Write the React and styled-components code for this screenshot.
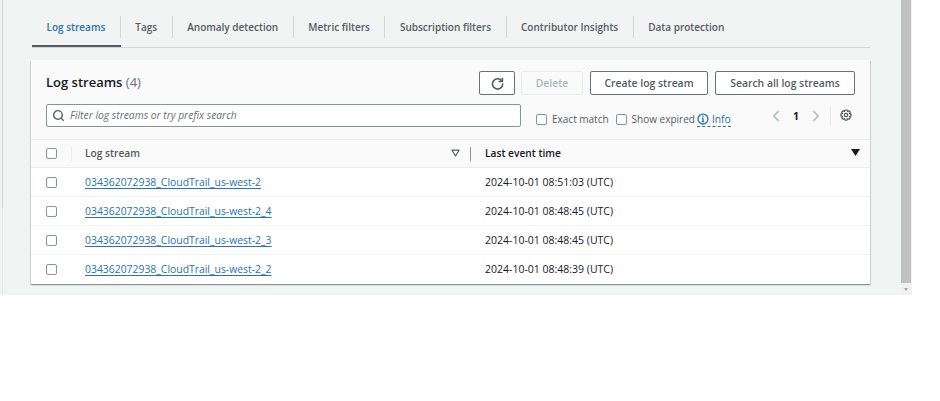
import React from 'react';
import styled, { createGlobalStyle } from 'styled-components';
import { FiSearch, FiChevronLeft, FiChevronRight } from 'react-icons/fi';

const GlobalStyle = createGlobalStyle`
  html, body {
    margin: 0;
    padding: 0;
    background: #fff;
    font-family: "Open Sans", "Noto Sans", sans-serif;
    font-size: 11px;
    color: #16191f;
  }
`;

const Page = styled.div`
  width: 912px;
  height: 295px;
  display: flex;
  background: #f2f3f3;
  overflow: hidden;
`;

const LeftEdge = styled.div`
  width: 1px;
  flex: none;
  margin-left: 2px;
  margin-right: 28px;
  background: linear-gradient(#d5d7d7 0, #d5d7d7 208px, #e6e7e7 208px);
`;

const Main = styled.div`
  width: 839px;
  flex: none;
  padding-top: 16px;
`;

const Tabs = styled.div`
  height: 32px;
  margin-left: 1px;
  margin-bottom: 12px;
  display: flex;
  border-bottom: 1px solid #d5d7d7;
  box-sizing: border-box;
`;

const Tab = styled.div`
  height: 22px;
  padding: 0 14.5px;
  display: flex;
  align-items: center;
  box-sizing: border-box;
  flex: none;
  font-size: 10px;
  font-weight: 600;
  color: ${p => (p.$active ? '#2a73ad' : '#545b64')};
  position: relative;
  border-right: ${p => (p.$last ? 'none' : '1px solid #d5d7d7')};

  &::after {
    content: '';
    display: ${p => (p.$active ? 'block' : 'none')};
    position: absolute;
    left: 0;
    right: -1px;
    top: 29px;
    height: 2px;
    background: #545b64;
  }
`;

const Card = styled.div`
  width: 839px;
  height: 224px;
  background: #fff;
  box-shadow: 0 1px 1px 0 rgba(0, 28, 36, 0.3), 1px 1px 1px 0 rgba(0, 28, 36, 0.1), -1px 1px 1px 0 rgba(0, 28, 36, 0.1);
`;

const CardHeader = styled.div`
  height: 79px;
  box-sizing: border-box;
  padding: 11px 15px 0 15px;
  background: #fafafa;
`;

const TitleRow = styled.div`
  display: flex;
  align-items: center;
  justify-content: space-between;
  height: 24px;
  margin-bottom: 9px;
`;

const Title = styled.h2`
  margin: 0 0 2px;
  font-size: 13px;
  font-weight: 600;
  color: #16191f;

  span {
    font-weight: 400;
    color: #687078;
  }
`;

const Actions = styled.div`
  display: flex;
  gap: 7px;
`;

const Button = styled.div`
  height: 24px;
  width: ${p => p.$w}px;
  margin-right: ${p => p.$mr || 0}px;
  box-sizing: border-box;
  border: 1px solid ${p => (p.$disabled ? '#eaeded' : '#687078')};
  border-radius: 2px;
  background: ${p => (p.$disabled ? '#fafafa' : '#fff')};
  color: ${p => (p.$disabled ? '#aab7b8' : '#545b64')};
  font-size: 10.4px;
  font-weight: 600;
  display: flex;
  align-items: center;
  justify-content: center;
`;

const FilterRow = styled.div`
  display: flex;
  align-items: center;
  height: 23px;
`;

const SearchBox = styled.div`
  width: 475px;
  height: 23px;
  box-sizing: border-box;
  flex: none;
  display: flex;
  align-items: center;
  gap: 5px;
  padding: 0 0 1px 5px;
  background: #fff;
  border: 1px solid #879596;
  border-radius: 2px;
  font-size: 10.3px;
  font-style: italic;
  color: #687078;
  svg {
    font-size: 13px;
    color: #545b64;
    stroke-width: 2.6;
  }
`;

const Check = styled.span`
  width: 11px;
  height: 11px;
  box-sizing: border-box;
  flex: none;
  display: block;
  background: #fff;
  border: 1px solid #879596;
  border-radius: 2px;
`;

const Options = styled.div`
  display: flex;
  align-items: center;
  padding-top: 7px;
`;

const Option = styled.label`
  display: flex;
  align-items: center;
  gap: 5px;
  margin-left: ${p => p.$ml}px;
  font-size: 10px;
  color: #545b64;
  white-space: nowrap;
`;

const Info = styled.span`
  display: flex;
  align-items: center;
  gap: 3px;
  margin-left: 2px;
  color: #2a73ad;
  font-size: 10.3px;
  border-bottom: 1px dashed #2a73ad;
  height: 14px;
`;

const Pager = styled.div`
  display: flex;
  align-items: center;
  margin-left: auto;
  height: 20px;
  color: #aab7b8;
  font-size: 18px;
`;

const PageNumber = styled.span`
  width: 22px;
  text-align: center;
  font-size: 10.5px;
  font-weight: 700;
  color: #16191f;
`;

const Gear = styled.span`
  display: flex;
  align-items: center;
  height: 20px;
  margin-left: 5px;
  padding: 0 3px 2px 9px;
  box-sizing: border-box;
  border-left: 1px solid #eaeded;
  color: #545b64;
`;

const Row = styled.div`
  display: grid;
  grid-template-columns: 40px 399px 1fr;
  align-items: center;
  height: 29px;
  box-sizing: border-box;
  border-bottom: 1px solid ${p => (p.$head ? '#eaeded' : '#f2f3f3')};
  background: ${p => (p.$head ? '#fafafa' : '#fff')};
  border-top: ${p => (p.$head ? '1px solid #eaeded' : 'none')};
  &:last-child {
    border-bottom-color: transparent;
  }
`;

const CheckCell = styled.div`
  display: flex;
  height: 100%;
  align-items: center;
  padding-left: 15px;
  box-sizing: border-box;
`;

const HeadCell = styled.div`
  position: relative;
  display: flex;
  align-items: center;
  justify-content: space-between;
  height: 100%;
  box-sizing: border-box;
  padding: 0 ${p => p.$pr}px 2px ${p => p.$pl}px;
  font-size: 10.2px;
  font-weight: 600;
  color: ${p => (p.$sorted ? '#16191f' : '#545b64')};
  &::before {
    content: '';
    position: absolute;
    left: 0;
    top: 7px;
    height: 14px;
    border-left: 1px solid ${p => p.$line};
  }
`;

const Cell = styled.div`
  padding-left: ${p => p.$pl}px;
  font-size: ${p => p.$size}px;
  color: #16191f;
`;

const StreamLink = styled.a`
  color: #2a73ad;
  text-decoration: underline;
  text-underline-offset: 2px;
`;

const streams = [
  ['034362072938_CloudTrail_us-west-2', '2024-10-01 08:51:03 (UTC)'],
  ['034362072938_CloudTrail_us-west-2_4', '2024-10-01 08:48:45 (UTC)'],
  ['034362072938_CloudTrail_us-west-2_3', '2024-10-01 08:48:45 (UTC)'],
  ['034362072938_CloudTrail_us-west-2_2', '2024-10-01 08:48:39 (UTC)'],
];

const tabs = ['Log streams', 'Tags', 'Anomaly detection', 'Metric filters', 'Subscription filters', 'Contributor Insights', 'Data protection'];

const Scrollbar = styled.div`
  width: 11px;
  margin-left: auto;
  flex: none;
  display: flex;
  flex-direction: column;
  background: #f1f1f1;
`;

const Thumb = styled.div`
  height: 283px;
  width: 10px;
  background: #c1c1c1;
`;

const ArrowDown = styled.div`
  width: 0;
  height: 0;
  margin: 5px 0 0 3px;
  border-left: 2px solid transparent;
  border-right: 2px solid transparent;
  border-top: 3px solid #a3a3a3;
`;

function RefreshIcon() {
  return (
    <svg width="13" height="13" viewBox="0 0 16 16" fill="none" stroke="#545b64" strokeWidth="2">
      <path d="M14 1v4.6H9.4" />
      <path d="M13.6 5.4A6.3 6.3 0 1 0 14.4 8" />
    </svg>
  );
}

function GearIcon() {
  return (
    <svg width="12" height="12" viewBox="0 0 16 16" fill="none" stroke="currentColor" strokeWidth="1.6">
      <circle cx="8" cy="8" r="2.3" />
      <path d="M6.6 1.3h2.8l.5 2 1.8-1 2 2-1 1.8 2 .5v2.8l-2 .5 1 1.8-2 2-1.8-1-.5 2H6.6l-.5-2-1.8 1-2-2 1-1.8-2-.5V6.6l2-.5-1-1.8 2-2 1.8 1z" strokeLinejoin="round" />
    </svg>
  );
}

function InfoIcon() {
  return (
    <svg width="12" height="12" viewBox="0 0 16 16" fill="none" stroke="#2a73ad" strokeWidth="1.8">
      <circle cx="8" cy="8" r="6.6" />
      <path d="M8 7v4.5M6.4 11.5h3.2M6.6 7H8" />
      <path d="M8 3.8v1.6" />
    </svg>
  );
}

function FilterCaret() {
  return (
    <svg width="9" height="8" viewBox="0 0 9 8" fill="none" stroke="#545b64" strokeWidth="1.2">
      <path d="M1 1.2h7L4.5 7z" strokeLinejoin="round" />
    </svg>
  );
}

function SortCaret() {
  return (
    <svg width="9" height="7" viewBox="0 0 9 7" fill="#16191f">
      <path d="M0 0h9L4.5 7z" />
    </svg>
  );
}

export default function App() {
  return (
    <>
      <GlobalStyle />
      <Page>
        <LeftEdge />
        <Main>
          <Tabs>
            {tabs.map((t, i) => (
              <Tab key={t} $active={i === 0} $last={i === tabs.length - 1}>{t}</Tab>
            ))}
          </Tabs>
          <Card>
            <CardHeader>
              <TitleRow>
                <Title>Log streams <span>(4)</span></Title>
                <Actions>
                  <Button $w={36} $mr={-1}><RefreshIcon /></Button>
                  <Button $w={62} $disabled>Delete</Button>
                  <Button $w={118}>Create log stream</Button>
                  <Button $w={140}>Search all log streams</Button>
                </Actions>
              </TitleRow>
              <FilterRow>
                <SearchBox><FiSearch />Filter log streams or try prefix search</SearchBox>
                <Options>
                  <Option $ml={15}><Check />Exact match</Option>
                  <Option $ml={7}><Check />Show expired</Option>
                  <Info><InfoIcon />Info</Info>
                </Options>
                <Pager>
                  <FiChevronLeft />
                  <PageNumber>1</PageNumber>
                  <FiChevronRight />
                  <Gear><GearIcon /></Gear>
                </Pager>
              </FilterRow>
            </CardHeader>
            <Row $head>
              <CheckCell><Check /></CheckCell>
              <HeadCell $pl={14} $pr={10} $line="#eaeded">Log stream<FilterCaret /></HeadCell>
              <HeadCell $pl={15} $pr={10} $line="#879596" $sorted>Last event time<SortCaret /></HeadCell>
            </Row>
            {streams.map(([name, time]) => (
              <Row key={name}>
                <CheckCell><Check /></CheckCell>
                <Cell $pl={14} $size={10.4}><StreamLink>{name}</StreamLink></Cell>
                <Cell $pl={15} $size={10.5}>{time}</Cell>
              </Row>
            ))}
          </Card>
        </Main>
        <Scrollbar>
          <Thumb />
          <ArrowDown />
        </Scrollbar>
      </Page>
    </>
  );
}
